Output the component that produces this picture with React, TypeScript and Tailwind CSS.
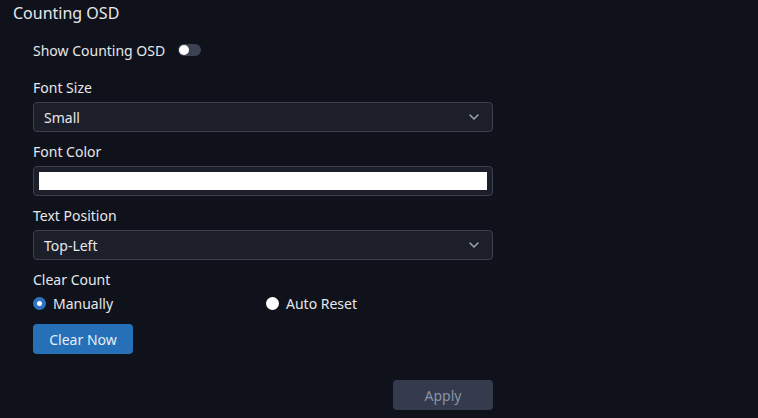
import { useState } from "react";

const Chevron = () => (
  <svg width="12" height="12" viewBox="0 0 12 12" className="text-[#9aa1ad]">
    <path d="M2 4l4 4 4-4" fill="none" stroke="currentColor" strokeWidth="1.6" strokeLinecap="round" strokeLinejoin="round" />
  </svg>
);

const SelectBox = ({ value }: { value: string }) => (
  <div className="flex h-[30px] w-[460px] items-center justify-between rounded-[4px] border border-[#3b404c] bg-[#1c1f29] pl-[10px] pr-[12px] text-[14px] text-[#e6e8ec]">
    <span>{value}</span>
    <Chevron />
  </div>
);

const Radio = ({ checked, label }: { checked: boolean; label: string }) => (
  <label className="flex items-center gap-[7px] text-[14px] text-[#e6e8ec]">
    {checked ? (
      <span className="flex h-[13px] w-[13px] items-center justify-center rounded-full bg-[#2e73c2]">
        <span className="h-[5px] w-[5px] rounded-full bg-white" />
      </span>
    ) : (
      <span className="h-[13px] w-[13px] rounded-full bg-white" />
    )}
    {label}
  </label>
);

export default function App() {
  const [mode] = useState<"manual" | "auto">("manual");

  return (
    <div
      className="h-[418px] w-[758px] bg-[#0f121a] text-[#e6e8ec]"
      style={{ fontFamily: '"Noto Sans", "Open Sans", sans-serif' }}
    >
      <h2 className="pl-[13px] pt-[2px] text-[16px] leading-[22px]">Counting OSD</h2>

      <div className="pl-[33px] pt-[15px]">
        {/* toggle row */}
        <div className="flex h-[22px] items-center gap-[13px] text-[14px]">
          <span>Show Counting OSD</span>
          <span className="flex h-[12px] w-[23px] items-center rounded-full bg-[#3b4252] px-[1px]">
            <span className="h-[10px] w-[10px] rounded-full bg-white" />
          </span>
        </div>

        <div className="mt-[17px] text-[14px] leading-[20px]">Font Size</div>
        <div className="mt-[4px]">
          <SelectBox value="Small" />
        </div>

        <div className="mt-[10px] text-[14px] leading-[20px]">Font Color</div>
        <div className="mt-[4px] flex h-[30px] w-[460px] items-center rounded-[4px] border border-[#3b404c] bg-[#1c1f29] px-[5px]">
          <div className="h-[18px] w-full bg-white" />
        </div>

        <div className="mt-[10px] text-[14px] leading-[20px]">Text Position</div>
        <div className="mt-[4px]">
          <SelectBox value="Top-Left" />
        </div>

        <div className="mt-[10px] text-[14px] leading-[20px]">Clear Count</div>
        <div className="mt-[3px] flex h-[20px] items-center">
          <div className="w-[233px]">
            <Radio checked={mode === "manual"} label="Manually" />
          </div>
          <Radio checked={mode === "auto"} label="Auto Reset" />
        </div>

        <button className="mt-[11px] flex h-[30px] w-[100px] items-center justify-center rounded-[4px] bg-[#2670b8] text-[14px] text-[#e8eef6]">
          Clear Now
        </button>

        <div className="mt-[26px] flex w-[460px] justify-end">
          <button className="flex h-[30px] w-[100px] items-center justify-center rounded-[4px] bg-[#333b4d] text-[14px] text-[#8a93a6]">
            Apply
          </button>
        </div>
      </div>
    </div>
  );
}
